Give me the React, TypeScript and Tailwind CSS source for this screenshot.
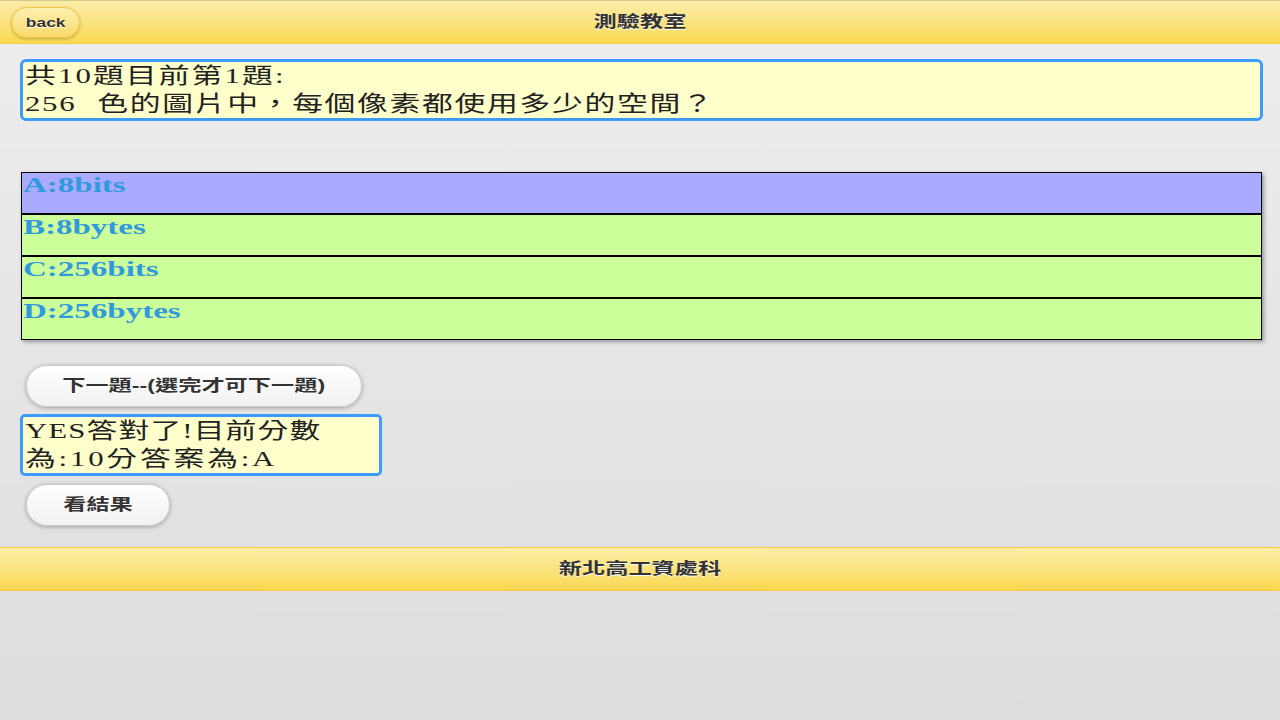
import React from "react";

const SANS = '"Liberation Sans", "Noto Sans CJK TC", sans-serif';
const SERIF = '"Liberation Serif", "Noto Sans CJK TC", serif';

function Stretch({ children, origin = "left", k = "q" }: { children: React.ReactNode; origin?: "left" | "center"; k?: "q" | "o" | "h" }) {
  const scale = k === "o" ? "scale-x-[1.5]" : k === "h" ? "scale-x-[1.45]" : "scale-x-[1.4]";
  return (
    <span className={`inline-block whitespace-nowrap ${scale} ${origin === "left" ? "origin-left" : "origin-center"}`}>
      {children}
    </span>
  );
}

function PillButton({ label, width }: { label: string; width: string }) {
  return (
    <button
      className={`ml-[6px] h-[42px] ${width} rounded-full border border-[#cccccc] bg-gradient-to-b from-[#ffffff] to-[#f1f1f1] shadow-[0_1px_4px_rgba(0,0,0,0.3)] text-[16px] font-bold text-[#333333] [text-shadow:0_1px_0_#fff] flex items-center justify-center`}
      style={{ fontFamily: SANS }}
    >
      <Stretch origin="center" k="h">{label}</Stretch>
    </button>
  );
}

export default function App() {
  const options = [
    { t: "A:8bits", sel: true },
    { t: "B:8bytes", sel: false },
    { t: "C:256bits", sel: false },
    { t: "D:256bytes", sel: false },
  ];
  return (
    <div className="min-h-[720px] w-full bg-gradient-to-b from-[#eeeeee] to-[#dddddd]" style={{ fontFamily: SANS }}>
      {/* header */}
      <div className="relative h-[44px] border-t border-b border-t-[#d6c48c] border-b-[#f7c942] bg-gradient-to-b from-[#fceda7] to-[#f9d94f] flex items-center justify-center">
        <button className="absolute left-[11px] top-[6px] h-[31px] w-[69px] rounded-full border border-[#f4c63f] bg-gradient-to-b from-[#fdf0b0] to-[#fad96a] shadow-[0_1px_3px_rgba(0,0,0,0.25)] text-[12px] font-bold text-[#333333] [text-shadow:0_1px_0_#fff] flex items-center justify-center">
          <Stretch origin="center" k="h">back</Stretch>
        </button>
        <div className="text-[16px] font-bold text-[#333333] [text-shadow:0_1px_0_#fff]">
          <Stretch origin="center" k="h">測驗教室</Stretch>
        </div>
      </div>

      {/* content */}
      <div className="pl-[20px] pr-[17px] pt-[15px] pb-[21px] flex flex-col">
        <div
          className="h-[62px] rounded-[6px] border-[3px] border-[#3d9bff] bg-[#ffffcc] pl-[2px] text-[22px] leading-[28px] text-[#222222]"
          style={{ fontFamily: SERIF }}
        >
          <div className="tracking-[1.5px]">
            <Stretch>共10題目前第1題:</Stretch>
          </div>
          <div className="tracking-[1.2px]">
            <Stretch>
              256<span className="inline-block w-[15px]"> </span>色的圖片中，每個像素都使用多少的空間？
            </Stretch>
          </div>
        </div>

        <div className="mt-[51px] mx-[1px] border border-black bg-[#ccff99] shadow-[2px_2px_4px_rgba(0,0,0,0.35)]" style={{ fontFamily: SERIF }}>
          {options.map((o, i) => (
            <div
              key={o.t}
              className={`h-[40px] ${i > 0 ? "border-t-2 border-black h-[42px]" : ""} ${o.sel ? "bg-[#aaaaff]" : "bg-[#ccff99]"} pl-[1px] text-[22px] leading-[24px] font-bold text-[#3399dd]`}
            >
              <Stretch k="o">{o.t}</Stretch>
            </div>
          ))}
        </div>

        <div className="mt-[25px]">
          <PillButton label="下一題--(選完才可下一題)" width="w-[336px]" />
        </div>

        <div
          className="mt-[7px] h-[62px] w-[362px] rounded-[5px] border-[3px] border-[#3d9bff] bg-[#ffffcc] pl-[2px] text-[22px] leading-[28px] text-[#222222]"
          style={{ fontFamily: SERIF }}
        >
          <div className="tracking-[0.8px]">
            <Stretch>YES答對了!目前分數</Stretch>
          </div>
          <div className="tracking-[2px]">
            <Stretch>為:10分答案為:A</Stretch>
          </div>
        </div>

        <div className="mt-[8px]">
          <PillButton label="看結果" width="w-[144px]" />
        </div>
      </div>

      {/* footer */}
      <div className="h-[44px] border-t border-b border-[#f7c942] bg-gradient-to-b from-[#fceda7] to-[#f9d94f] flex items-center justify-center">
        <div className="text-[16px] font-bold text-[#333333] [text-shadow:0_1px_0_#fff]">
          <Stretch origin="center" k="h">新北高工資處科</Stretch>
        </div>
      </div>
    </div>
  );
}
